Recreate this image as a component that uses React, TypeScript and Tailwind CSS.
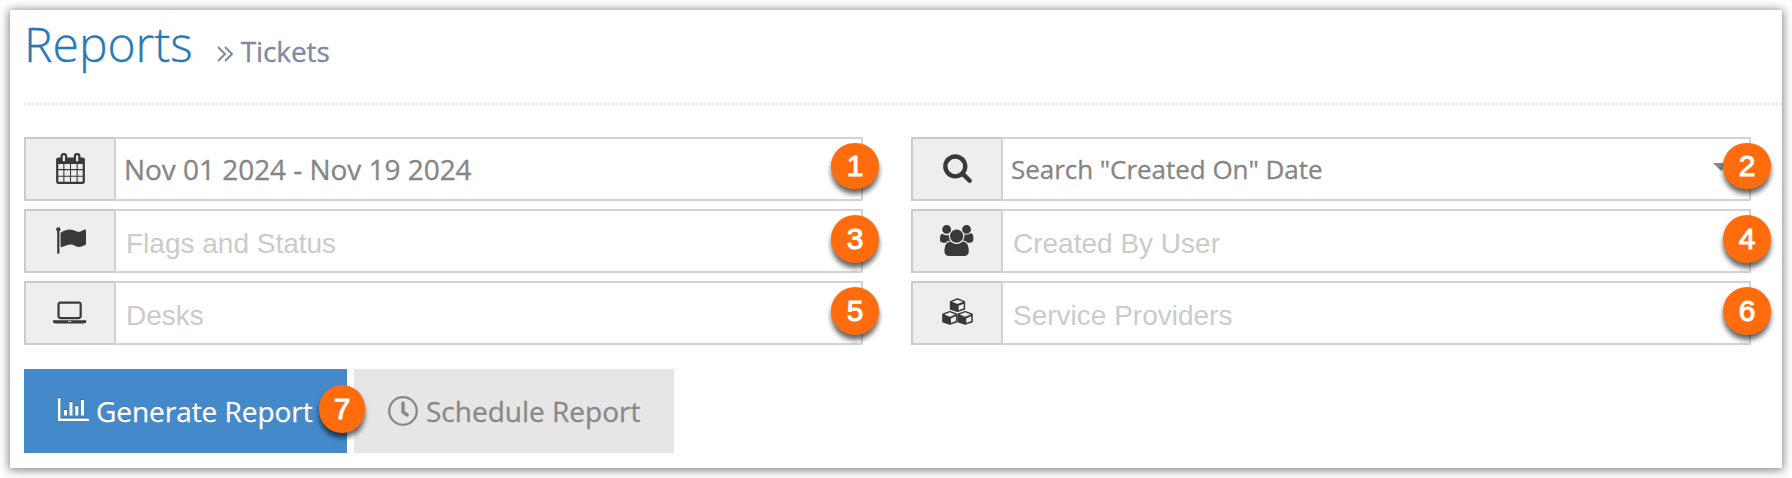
import type { ReactNode } from 'react'
import clsx from 'clsx'

type IconProps = { className?: string }

function CalendarIcon({ className }: IconProps) {
  return (
    <svg viewBox="0 0 1792 1792" fill="currentColor" className={className}>
      <path d="M192 1664h288v-288h-288v288zm352 0h320v-288h-320v288zm-352-352h288v-320h-288v320zm352 0h320v-320h-320v320zm-352-384h288v-288h-288v288zm736 736h320v-288h-320v288zm-384-736h320v-288h-320v288zm768 736h288v-288h-288v288zm-384-352h320v-320h-320v320zm-352-864v-288q0-13-9.5-22.5t-22.5-9.5h-64q-13 0-22.5 9.5t-9.5 22.5v288q0 13 9.5 22.5t22.5 9.5h64q13 0 22.5-9.5t9.5-22.5zm736 864h288v-320h-288v320zm-384-384h320v-288h-320v288zm384 0h288v-288h-288v288zm32-480v-288q0-13-9.5-22.5t-22.5-9.5h-64q-13 0-22.5 9.5t-9.5 22.5v288q0 13 9.5 22.5t22.5 9.5h64q13 0 22.5-9.5t9.5-22.5zm384-64v1280q0 52-38 90t-90 38h-1408q-52 0-90-38t-38-90v-1280q0-52 38-90t90-38h128v-96q0-66 47-113t113-47h64q66 0 113 47t47 113v96h384v-96q0-66 47-113t113-47h64q66 0 113 47t47 113v96h128q52 0 90 38t38 90z" />
    </svg>
  )
}

function SearchIcon({ className }: IconProps) {
  return (
    <svg viewBox="0 0 1792 1792" fill="currentColor" className={className}>
      <path d="M1216 832q0-185-131.5-316.5t-316.5-131.5-316.5 131.5-131.5 316.5 131.5 316.5 316.5 131.5 316.5-131.5 131.5-316.5zm512 832q0 52-38 90t-90 38q-54 0-90-38l-343-342q-179 124-399 124-143 0-273.5-55.5t-225-150-150-225-55.5-273.5 55.5-273.5 150-225 225-150 273.5-55.5 273.5 55.5 225 150 150 225 55.5 273.5q0 220-124 399l343 343q37 37 37 90z" />
    </svg>
  )
}

function FlagIcon({ className }: IconProps) {
  return (
    <svg viewBox="0 0 1792 1792" fill="currentColor" className={className}>
      <path d="M320 256q0 72-64 110v1266q0 13-9.5 22.5t-22.5 9.5h-64q-13 0-22.5-9.5t-9.5-22.5v-1266q-64-38-64-110 0-53 37.5-90.5t90.5-37.5 90.5 37.5 37.5 90.5zm1472 64v763q0 25-12.5 38.5t-39.5 27.5q-215 116-369 116-61 0-123.5-22t-108.5-48-115.5-48-142.5-22q-192 0-464 146-17 9-33 9-26 0-45-19t-19-45v-742q0-32 31-55 21-14 79-43 236-120 421-120 107 0 200 29t219 88q38 19 88 19 54 0 117.5-21t110-47 88-47 54.5-21q26 0 45 19t19 45z" />
    </svg>
  )
}

function UsersIcon({ className }: IconProps) {
  return (
    <svg viewBox="0 0 1920 1792" fill="currentColor" className={className}>
      <path d="M593 896q-162 5-265 128h-134q-82 0-138-40.5t-56-118.5q0-353 124-353 6 0 43.5 21t97.5 42.5 119 21.5q67 0 133-23-5 37-5 66 0 159 93 291zm1071 637q0 120-73 189.5t-194 69.5h-874q-121 0-194-69.5t-73-189.5q0-53 3.5-103.5t14-109 26.5-108.5 43-97.5 62-81 85.5-53.5 111.5-20q10 0 43 21.5t73 48 107 48 135 21.5 135-21.5 107-48 73-48 43-21.5q61 0 111.5 20t85.5 53.5 62 81 43 97.5 26.5 108.5 14 109 3.5 103.5zm-1024-1277q0 106-75 181t-181 75-181-75-75-181 75-181 181-75 181 75 75 181zm704 384q0 159-112.5 271.5t-271.5 112.5-271.5-112.5-112.5-271.5 112.5-271.5 271.5-112.5 271.5 112.5 112.5 271.5zm576 225q0 78-56 118.5t-138 40.5h-134q-103-123-265-128 93-132 93-291 0-29-5-66 66 23 133 23 59 0 119-21.5t97.5-42.5 43.5-21q124 0 124 353zm-128-609q0 106-75 181t-181 75-181-75-75-181 75-181 181-75 181 75 75 181z" />
    </svg>
  )
}

function LaptopIcon({ className }: IconProps) {
  return (
    <svg viewBox="0 0 1920 1792" fill="currentColor" className={className}>
      <path d="M416 1280q-66 0-113-47t-47-113v-704q0-66 47-113t113-47h1088q66 0 113 47t47 113v704q0 66-47 113t-113 47h-1088zm-32-864v704q0 13 9.5 22.5t22.5 9.5h1088q13 0 22.5-9.5t9.5-22.5v-704q0-13-9.5-22.5t-22.5-9.5h-1088q-13 0-22.5 9.5t-9.5 22.5zm1376 928h160v96q0 40-47 68t-113 28h-1600q-66 0-113-28t-47-68v-96h1760zm-720 96q16 0 16-16t-16-16h-160q-16 0-16 16t16 16h160z" />
    </svg>
  )
}

const CUBES = [
  { x: 23, y: 0 },
  { x: 0, y: 38 },
  { x: 46, y: 38 },
]

function CubesIcon({ className }: IconProps) {
  return (
    <svg viewBox="0 0 93 81" className={className}>
      {CUBES.map(({ x, y }) => (
        <g key={`${x}-${y}`} transform={`translate(${x} ${y})`}>
          <path
            d="M23.5 3L44 11V33L23.5 40L3 33V11z"
            fill="currentColor"
            stroke="currentColor"
            strokeWidth="5"
            strokeLinejoin="round"
          />
          <path d="M23.5 5L40 11.5L23.5 18L7 11.5zM27 23L42 17V31L27 37z" fill="#eee" />
        </g>
      ))}
    </svg>
  )
}

function BarChartIcon({ className }: IconProps) {
  return (
    <svg viewBox="0 0 31 23" fill="currentColor" className={className}>
      <path d="M0 0h2.4v20.6H31V23H0zM6 12h3v5.6H6zM11.5 4h3v13.6h-3zM17.3 8h3v9.6h-3zM23 2h3v15.6h-3z" />
    </svg>
  )
}

function ClockIcon({ className }: IconProps) {
  return (
    <svg viewBox="0 0 30 30" fill="none" stroke="currentColor" className={className}>
      <circle cx="15" cy="15" r="13.8" strokeWidth="2.3" />
      <path d="M15 7v9l4.2 3" strokeWidth="3.4" strokeLinecap="round" strokeLinejoin="round" />
    </svg>
  )
}

function Badge({ value, className }: { value: number; className?: string }) {
  return (
    <span
      className={clsx(
        'absolute flex items-center justify-center rounded-full bg-[#ff6c0e] font-["Liberation_Sans",sans-serif] text-[30px] leading-none text-white shadow-[0_5px_5px_rgba(0,0,0,0.6)] text-shadow-none [-webkit-text-stroke:1px_white]',
        className,
      )}
    >
      {value}
    </span>
  )
}

type FieldProps = {
  icon: ReactNode
  badge: number
  badgeClass?: string
  children: ReactNode
}

function Field({ icon, badge, badgeClass = 'size-12 -right-4', children }: FieldProps) {
  return (
    <div className="relative flex h-16">
      <div className="flex w-[90px] shrink-0 justify-center border-2 border-r-0 border-[#cacaca] bg-[#eee] text-[#393939]">
        {icon}
      </div>
      <div className="flex flex-1 items-center border-2 border-[#d3d3d3] bg-white">
        {children}
      </div>
      <Badge value={badge} className={clsx('top-1.5', badgeClass)} />
    </div>
  )
}

function Placeholder({ children }: { children: ReactNode }) {
  return (
    <span className='mt-1.5 ml-2.5 font-["Liberation_Sans",sans-serif] text-[28px] leading-none whitespace-nowrap text-[#cbcbcb]'>
      {children}
    </span>
  )
}

export default function App() {
  return (
    <div className='h-[478px] bg-white p-2.5 font-["Open_Sans",sans-serif]'>
      <main className="h-[458px] w-[1772px] bg-white pl-3.5 shadow-[0_1px_9px_1px_rgba(0,0,0,0.5)]">
        {/* Page header */}
        <header className="flex h-[95px] items-baseline border-b-2 border-dotted border-[#e2e2e2]">
          <h1 className="text-[48px] leading-[68px] font-light text-[#2679b5] [-webkit-text-stroke:0.3px_#2679b5]">
            Reports
          </h1>
          <div className="ml-6 flex items-baseline text-[28px] text-[#8089a0]">
            <svg viewBox="0 0 16 16" fill="none" stroke="currentColor" strokeWidth="2" className="mr-2 size-4">
              <path d="M1 1l7 7-7 7M8 1l7 7-7 7" />
            </svg>
            <span className="tracking-[-0.1px] [-webkit-text-stroke:0.3px_#8089a0]">Tickets</span>
          </div>
        </header>

        {/* Filters */}
        <div className="mt-8 grid grid-cols-[839px_840px] gap-x-12 gap-y-2">
          <Field
            icon={<CalendarIcon className="mt-[13.5px] h-[31px]" />}
            badge={1}
            badgeClass="h-[46px] w-12 -right-4"
          >
            <span className="ml-2 text-[28px] leading-none tracking-[-0.04px] whitespace-nowrap text-[#858585] [-webkit-text-stroke:0.3px_#858585]">
              Nov 01 2024 - Nov 19 2024
            </span>
          </Field>
          <Field
            icon={<SearchIcon className="mt-[13px] h-[31px]" />}
            badge={2}
            badgeClass="h-[46px] w-12 -right-5"
          >
            <span className="ml-2 flex-1 text-[26px] leading-none tracking-[-0.04px] whitespace-nowrap text-[#858585] [-webkit-text-stroke:0.3px_#858585]">
              Search "Created On" Date
            </span>
            <svg viewBox="0 0 16 8" fill="#888" className="mr-5 mb-1 h-2 w-4">
              <path d="M0 0h16L8 8z" />
            </svg>
          </Field>
          <Field icon={<FlagIcon className="mt-3.5 h-[31px]" />} badge={3}>
            <Placeholder>Flags and Status</Placeholder>
          </Field>
          <Field
            icon={<UsersIcon className="mt-[13.5px] h-[31px]" />}
            badge={4}
            badgeClass="size-12 -right-5"
          >
            <Placeholder>Created By User</Placeholder>
          </Field>
          <Field icon={<LaptopIcon className="mt-[13.5px] h-[31px]" />} badge={5}>
            <Placeholder>Desks</Placeholder>
          </Field>
          <Field
            icon={<CubesIcon className="mt-[15px] h-[27px] w-[31px]" />}
            badge={6}
            badgeClass="size-12 -right-5"
          >
            <Placeholder>Service Providers</Placeholder>
          </Field>
        </div>

        {/* Actions */}
        <div className="mt-6 flex gap-[7px] text-[28px] leading-none">
          <button className="relative flex h-21 w-[323px] items-center bg-[#448aca] pl-[34px] text-white text-shadow-[0_-1px_0_rgba(0,0,0,0.25)]">
            <BarChartIcon className="mr-[7px] mb-1 h-[23px] w-[31px] drop-shadow-[0_-1px_0_rgba(0,0,0,0.25)]" />
            <span className="whitespace-nowrap tracking-[-0.05px] [-webkit-text-stroke:0.3px_white]">
              Generate Report
            </span>
            <Badge value={7} className="top-4 -right-[18px] z-10 h-12 w-[46px]" />
          </button>
          <button className="flex h-21 w-80 items-center bg-[#e6e6e6] pl-[34px] text-[#888]">
            <ClockIcon className="mr-2 size-[30px]" />
            <span className="whitespace-nowrap [-webkit-text-stroke:0.3px_#888]">Schedule Report</span>
          </button>
        </div>
      </main>
    </div>
  )
}
